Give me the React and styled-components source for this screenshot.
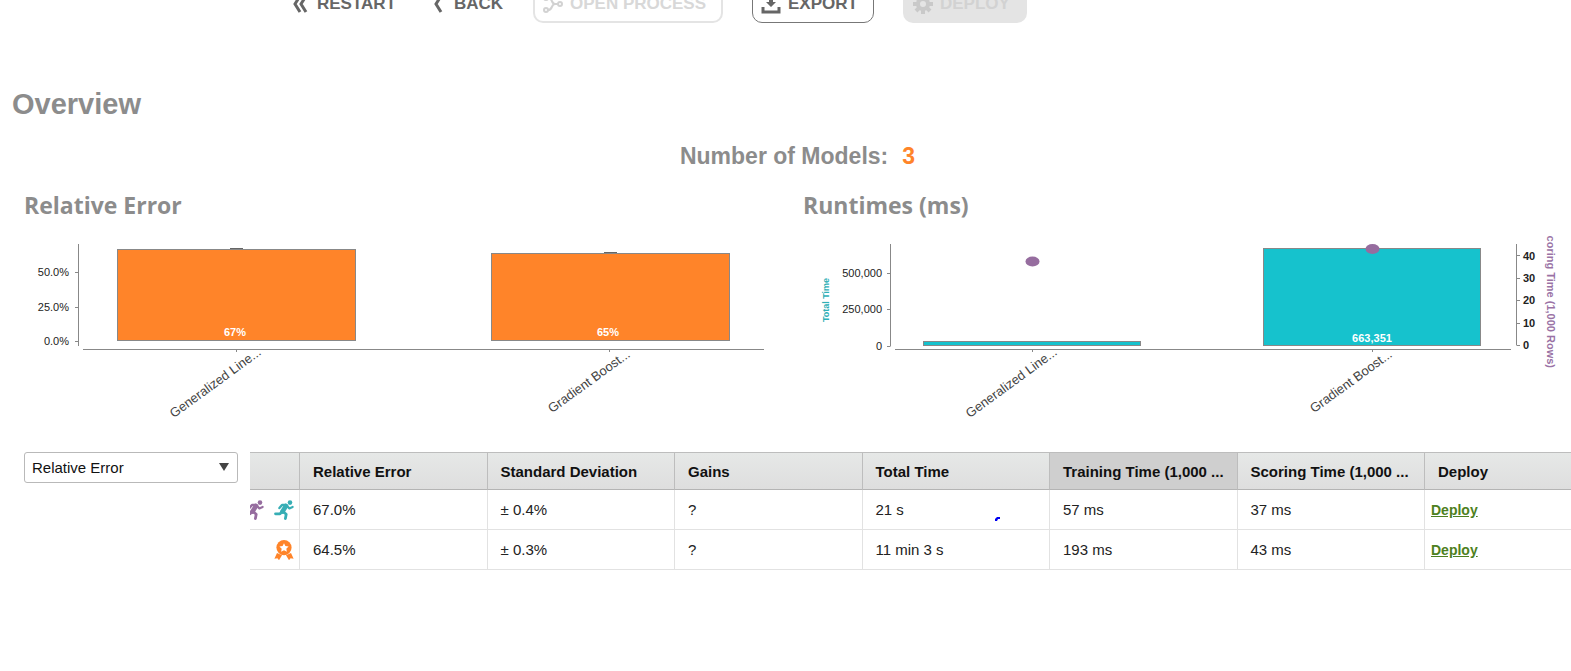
import React from 'react';
import styled, { createGlobalStyle, css } from 'styled-components';

const GlobalStyle = createGlobalStyle`
  * { box-sizing: border-box; }
  body {
    margin: 0;
    background: #fff;
    color: #222;
    font-family: "Liberation Sans", Arial, sans-serif;
    font-size: 15px;
  }
`;

const Toolbar = styled.header`
  display: flex;
  align-items: flex-end;
  gap: 29px;
  height: 23px;
  padding-left: 293px;
  overflow: hidden;
`;

const ToolButton = styled.button`
  display: flex;
  flex: none;
  align-items: center;
  gap: 7px;
  width: ${({ $width }) => $width}px;
  height: 38px;
  padding: 0 0 0 8px;
  border: 2px solid transparent;
  border-radius: 10px;
  background: transparent;
  color: #666;
  font: bold 17px/20px "Liberation Sans", Arial, sans-serif;
  white-space: nowrap;

  ${({ $kind }) => $kind === 'plain' && css`
    padding: 0;
    border: 0;
    gap: 9px;
  `}
  ${({ $kind }) => $kind === 'outline' && css`
    border: 1px solid #777;
  `}
  ${({ $kind }) => $kind === 'faded' && css`
    border-color: #e4e4e4;
    color: #d8d8d8;
  `}
  ${({ $kind }) => $kind === 'filled' && css`
    background: #e4e4e4;
    color: #d2d2d2;
  `}
`;

const PageTitle = styled.h1`
  margin: 63px 0 0 12px;
  color: #8c8c8c;
  font-size: 29px;
  line-height: 36px;
`;

const Content = styled.main`
  padding-left: 24px;
`;

const ModelCount = styled.p`
  display: flex;
  justify-content: center;
  gap: 14px;
  margin: 20px 0;
  color: #8c8c8c;
  font-size: 23px;
  font-weight: bold;
  line-height: 28px;

  strong { color: #ff8429; }
`;

const Charts = styled.section`
  display: grid;
  grid-template-columns: 1fr 1fr;
  column-gap: 11px;
`;

const ChartTitle = styled.h2`
  margin: 0 0 16px;
  color: #8c8c8c;
  font: bold 23px/30px "Open Sans", "Noto Sans", sans-serif;
`;

const Plot = styled.svg`
  display: block;
  width: 100%;
  height: auto;
  font-family: "Liberation Sans", Arial, sans-serif;
  font-size: 11px;

  .axis { stroke: #888; fill: none; }
  .tick { fill: #222; }
  .strong { fill: #222; font-weight: bold; }
  .name { fill: #444; font-size: 13px; }
  .value { fill: #fff; font-weight: bold; }
  .total { fill: #2fb0b6; font-size: 9px; font-weight: bold; }
  .scoring { fill: #9a72a5; font-weight: bold; }
`;

const Results = styled.section`
  display: flex;
  align-items: flex-start;
  gap: 12px;
  margin-top: 32px;
`;

const Picker = styled.div`
  position: relative;
  flex: none;
  width: 214px;

  svg {
    position: absolute;
    right: 9px;
    top: 11px;
    pointer-events: none;
  }
`;

const Select = styled.select`
  appearance: none;
  width: 100%;
  height: 31px;
  padding: 0 24px 0 7px;
  border: 1px solid #b9b9b9;
  border-radius: 3px;
  background: #fff;
  color: #111;
  font: 15px "Liberation Sans", Arial, sans-serif;
`;

const TableWrap = styled.div`
  flex: 1;
  min-width: 0;
  overflow: hidden;
`;

const Table = styled.table`
  width: 100%;
  table-layout: fixed;
  border-collapse: separate;
  border-spacing: 0;
`;

const Col = styled.col`
  width: ${({ $width }) => $width || 'auto'};
`;

const HeadCell = styled.th`
  height: 38px;
  padding: 0 0 0 13px;
  border-top: 1px solid #bdbdbd;
  border-bottom: 1px solid #b4b4b4;
  border-right: 1px solid #bdbdbd;
  background: ${({ $sorted }) => ($sorted ? '#cfcfcf' : 'linear-gradient(#e6e8e7, #dedede)')};
  color: #111;
  font-size: 15px;
  text-align: left;
  white-space: nowrap;

  &:last-child { border-right: 0; }
`;

const Cell = styled.td`
  position: relative;
  height: 40px;
  padding: 0 0 0 ${({ $inset = 13 }) => $inset}px;
  border-bottom: 1px solid #e2e2e2;
  border-right: 1px solid #e2e2e2;
  font-size: 15px;
  white-space: nowrap;

  &:last-child { border-right: 0; }
`;

const Badges = styled.div`
  display: flex;
  justify-content: flex-end;
  gap: 10px;
  padding-right: 5px;
  overflow: hidden;

  svg { flex: none; display: block; }
`;

const PenMark = styled.svg`
  position: absolute;
  left: 132px;
  bottom: 6px;
`;

const DeployLink = styled.a`
  color: #4d8020;
  font-size: 14px;
  font-weight: bold;
`;

const RestartIcon = () => (
  <svg width="15" height="18" viewBox="0 0 15 18" fill="none" stroke="#666" strokeWidth="3">
    <path d="M7 1 2 9l5 8M13 1 8 9l5 8" />
  </svg>
);

const BackIcon = () => (
  <svg width="12" height="18" viewBox="0 0 12 18" fill="none" stroke="#666" strokeWidth="3">
    <path d="M8 1 3 9l5 8" />
  </svg>
);

const ProcessIcon = () => (
  <svg width="20" height="18" viewBox="0 0 20 18" fill="none" stroke="#d2d2d2" strokeWidth="2">
    <circle cx="3" cy="3" r="2" />
    <circle cx="3" cy="15" r="2" />
    <circle cx="17" cy="9" r="2" />
    <path d="M5 3c5 0 3 6 7 6h3M5 15c5 0 3-6 7-6" />
  </svg>
);

const ExportIcon = () => (
  <svg width="20" height="20" viewBox="0 0 20 20">
    <path d="M2 13v5h16v-5" fill="none" stroke="#666" strokeWidth="3" />
    <path d="M8 2h4v6h3l-5 5-5-5h3z" fill="#666" />
  </svg>
);

const GearIcon = () => (
  <svg width="20" height="20" viewBox="0 0 20 20" fill="none" stroke="#c9c9c9">
    <circle cx="10" cy="10" r="5" strokeWidth="4" />
    <path
      d="M10 0v4M10 16v4M0 10h4M16 10h4M3 3l3 3M14 14l3 3M3 17l3-3M14 6l3-3"
      strokeWidth="4"
    />
  </svg>
);

const Runner = ({ color, label }) => (
  <svg width="20" height="20" viewBox="0 0 20 20" role="img" aria-label={label}>
    <circle cx="16" cy="2.600" r="2.300" fill={color} />
    <g fill="none" stroke={color} strokeWidth="2.800" strokeLinecap="round" strokeLinejoin="round">
      <path d="M12 6 8.500 11.500" strokeWidth="4.600" />
      <path d="M12 5H8L5.400 8" strokeWidth="2.400" />
      <path d="M13 6l2.400 2.400 3.200-1.400" strokeWidth="2.200" />
      <path d="M8 11.500 6 13.800H1.500" />
      <path d="M9 11.500l3.200 2.700-.8 4.300" />
    </g>
  </svg>
);

const Award = () => (
  <svg width="20" height="20" viewBox="0 0 20 20" role="img" aria-label="Best model">
    <path d="M3 13 .4 18.800l3-.6 1.600 2 3-5zM17 13l2.600 5.800-3-.6-1.600 2-3-5z" fill="#ff8429" />
    <circle cx="10" cy="7.600" r="7.600" fill="#ff8429" />
    <path
      d="M10 3.200l1.400 2.900 3.200.4-2.300 2.200.6 3.100-2.900-1.500-2.900 1.500.6-3.100-2.300-2.200 3.200-.4z"
      fill="#fff"
    />
  </svg>
);

const Name = ({ x, y, children }) => (
  <text className="name" textAnchor="end" transform={`translate(${x} ${y}) rotate(-36)`}>
    {children}
  </text>
);

const ErrorChart = () => (
  <Plot viewBox="0 0 768 184" role="img" aria-label="Relative error by model">
    <path
      className="axis"
      d="M54.500 8V110M51 36.500h3M51 71.500h3M51 105.500h3M59 113.500H740M212.500 114v2M585.500 114v2"
    />
    <g className="tick" textAnchor="end">
      <text x="45" y="40">50.0%</text>
      <text x="45" y="75">25.0%</text>
      <text x="45" y="109">0.0%</text>
    </g>
    <g fill="#ff8429" stroke="#888">
      <rect x="93.500" y="13.500" width="238" height="91" />
      <rect x="467.500" y="17.500" width="238" height="87" />
    </g>
    <path d="M206 12.500h13M580 16.500h13" stroke="#666" />
    <g className="value" textAnchor="middle">
      <text x="211" y="100">67%</text>
      <text x="584" y="100">65%</text>
    </g>
    <Name x={238} y={118}>Generalized Line...</Name>
    <Name x={607} y={120}>Gradient Boost...</Name>
  </Plot>
);

const RuntimeChart = () => (
  <Plot viewBox="0 0 768 184" role="img" aria-label="Total and scoring time by model">
    <path
      className="axis"
      d="M87.500 8V110.500M84 37.500h3M84 73.500h3M84 110.500h3M92 113.500H708M229.500 114v2M569.500 114v2M713.500 8V109.500M714 19.500h3M714 42.500h3M714 64.500h3M714 87.500h3M714 109.500h3"
    />
    <g className="tick" textAnchor="end">
      <text x="79" y="41">500,000</text>
      <text x="79" y="77">250,000</text>
      <text x="79" y="114">0</text>
    </g>
    <g className="strong">
      <text x="720" y="24">40</text>
      <text x="720" y="46">30</text>
      <text x="720" y="68">20</text>
      <text x="720" y="91">10</text>
      <text x="720" y="113">0</text>
    </g>
    <g fill="#16c2cd" stroke="#888">
      <rect x="120.500" y="105.500" width="217" height="4" />
      <rect x="460.500" y="12.500" width="217" height="97" />
    </g>
    <g fill="#966d9f">
      <ellipse cx="229.500" cy="25.500" rx="7" ry="5" />
      <ellipse cx="569.500" cy="13" rx="7" ry="5" />
    </g>
    <text className="value" textAnchor="middle" x="569" y="106">663,351</text>
    <Name x={255} y={118}>Generalized Line...</Name>
    <Name x={590} y={120}>Gradient Boost...</Name>
    <text className="total" textAnchor="middle" transform="translate(26 64) rotate(-90)">
      Total Time
    </text>
    <text className="scoring" textAnchor="end" transform="translate(744 132) rotate(90)">
      Scoring Time (1,000 Rows)
    </text>
  </Plot>
);

const headings = [
  'Relative Error',
  'Standard Deviation',
  'Gains',
  'Total Time',
  'Training Time (1,000 ...',
  'Scoring Time (1,000 ...',
  'Deploy',
];

const models = [
  {
    badges: (
      <>
        <Runner color="#966d9f" label="Fastest scoring" />
        <Runner color="#37aeb5" label="Fastest total" />
      </>
    ),
    values: ['67.0%', '± 0.4%', '?', '21 s', '57 ms', '37 ms'],
    marked: 3,
  },
  {
    badges: <Award />,
    values: ['64.5%', '± 0.3%', '?', '11 min 3 s', '193 ms', '43 ms'],
  },
];

export default function App() {
  return (
    <>
      <GlobalStyle />
      <Toolbar>
        <ToolButton $kind="plain" $width={111}><RestartIcon />RESTART</ToolButton>
        <ToolButton $kind="plain" $width={71}><BackIcon />BACK</ToolButton>
        <ToolButton $kind="faded" $width={190} disabled><ProcessIcon />OPEN PROCESS</ToolButton>
        <ToolButton $kind="outline" $width={122}><ExportIcon />EXPORT</ToolButton>
        <ToolButton $kind="filled" $width={124} disabled><GearIcon />DEPLOY</ToolButton>
      </Toolbar>
      <PageTitle>Overview</PageTitle>
      <Content>
        <ModelCount>
          <span>Number of Models:</span>
          <strong>3</strong>
        </ModelCount>
        <Charts>
          <div>
            <ChartTitle>Relative Error</ChartTitle>
            <ErrorChart />
          </div>
          <div>
            <ChartTitle>Runtimes (ms)</ChartTitle>
            <RuntimeChart />
          </div>
        </Charts>
        <Results>
          <Picker>
            <Select aria-label="Criterion" defaultValue="Relative Error">
              <option>Relative Error</option>
              <option>Standard Deviation</option>
              <option>Total Time</option>
            </Select>
            <svg width="10" height="8" viewBox="0 0 10 8">
              <path d="M0 0h10L5 8z" fill="#444" />
            </svg>
          </Picker>
          <TableWrap>
            <Table>
              <colgroup>
                <Col $width="50px" />
                {headings.slice(0, -1).map((h) => <Col key={h} />)}
                <Col $width="146px" />
              </colgroup>
              <thead>
                <tr>
                  <HeadCell aria-label="Awards" />
                  {headings.map((h, i) => (
                    <HeadCell key={h} scope="col" $sorted={i === 4}>{h}</HeadCell>
                  ))}
                </tr>
              </thead>
              <tbody>
                {models.map((m) => (
                  <tr key={m.values[0]}>
                    <Cell $inset={0}>
                      <Badges>{m.badges}</Badges>
                    </Cell>
                    {m.values.map((v, i) => (
                      <Cell key={headings[i]}>
                        {v}
                        {m.marked === i && (
                          <PenMark width="8" height="7" viewBox="0 0 8 7">
                            <path d="M0 5V3l2-2h3v2H3L2 5z" fill="#0000f0" />
                          </PenMark>
                        )}
                      </Cell>
                    ))}
                    <Cell $inset={6}><DeployLink href="#deploy">Deploy</DeployLink></Cell>
                  </tr>
                ))}
              </tbody>
            </Table>
          </TableWrap>
        </Results>
      </Content>
    </>
  );
}
